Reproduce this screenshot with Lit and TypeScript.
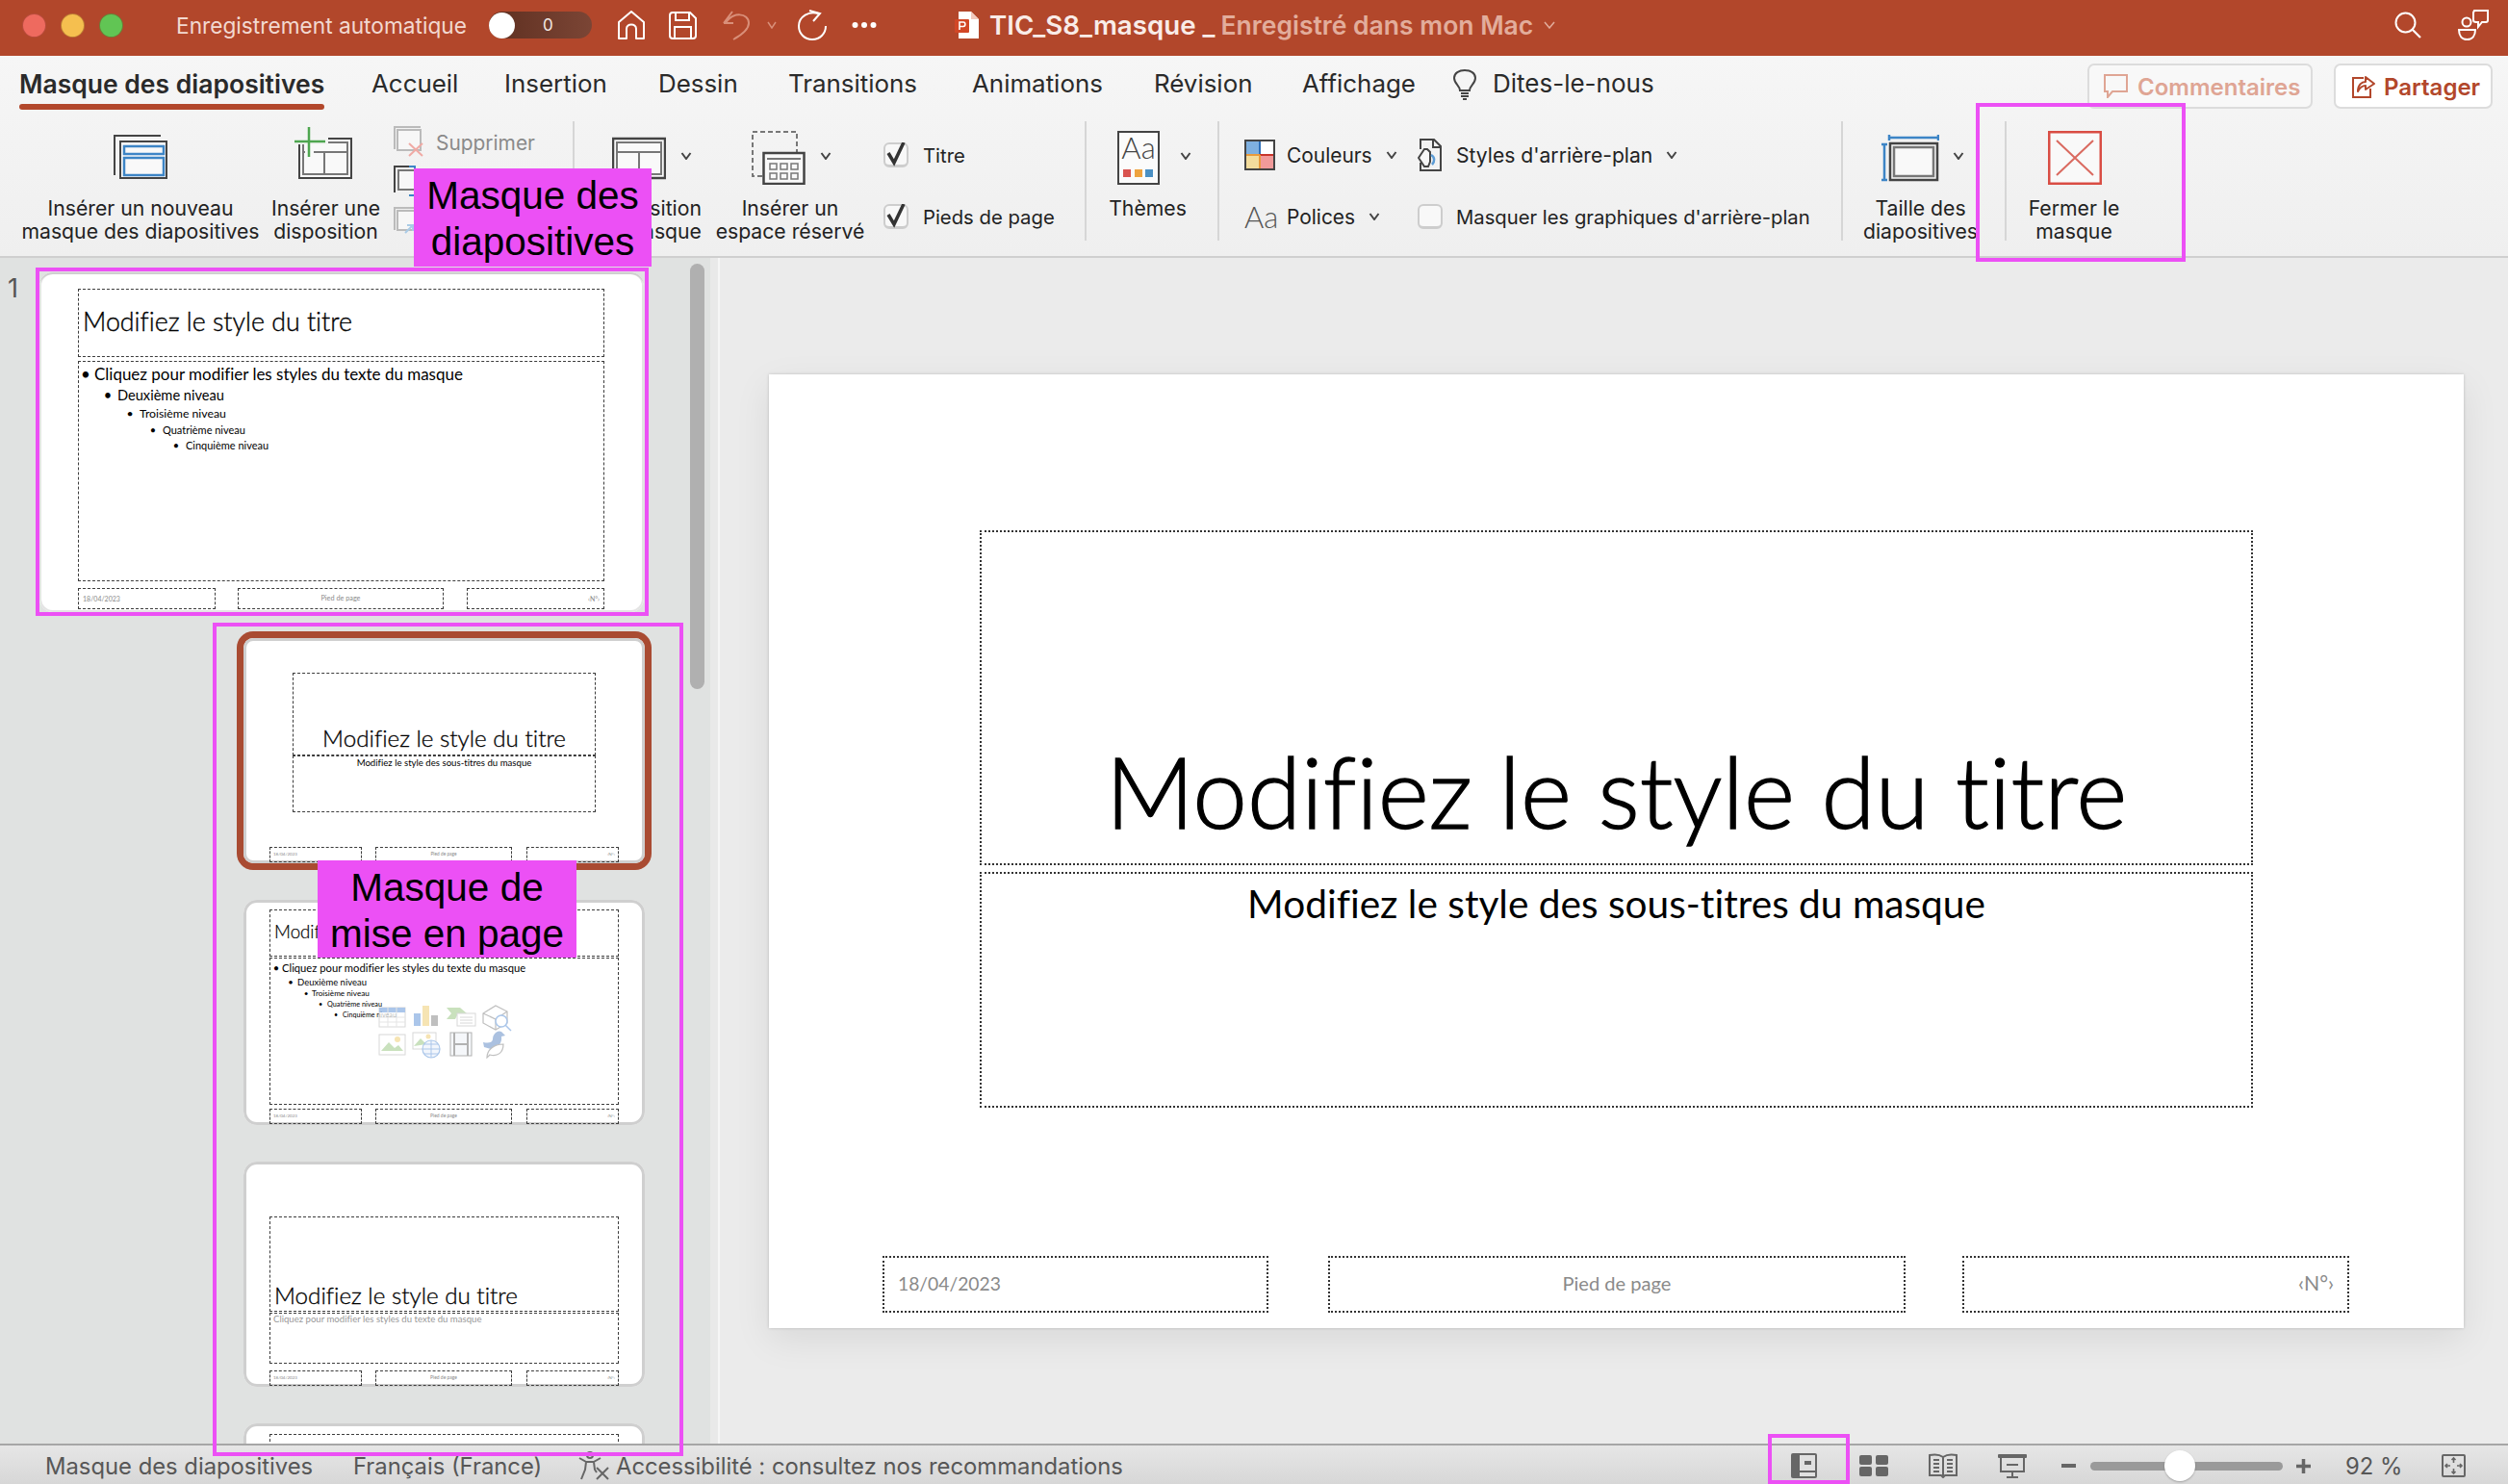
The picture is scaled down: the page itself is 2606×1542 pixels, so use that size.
import { LitElement, html, css, svg } from "lit";
import { customElement } from "lit/decorators.js";

const ctx = document.createElement("canvas").getContext("2d")! as CanvasRenderingContext2D & { letterSpacing: string };
function fit(text: string, target: number, weight = 400): number {
  ctx.font = `${weight} 100px Lato, sans-serif`;
  ctx.letterSpacing = "0.01px";
  return +((target / ctx.measureText(text).width) * 100).toFixed(2);
}

type Line = { bx: number; tx: number; y: number; t: string; w: number };
type Ph = {
  x: number; y: number; w: number; h: number;
  t?: string; tw?: number; c?: string; light?: boolean;
  a?: "l" | "c" | "r"; pt?: number; pl?: number; pr?: number; mid?: boolean;
  lines?: Line[];
};
type Thumb = { w: number; h: number; kind: string; phs: Ph[]; tools?: boolean };

const TITLE = "Modifiez le style du titre";
const SUB = "Modifiez le style des sous-titres du masque";
const L1 = "Cliquez pour modifier les styles du texte du masque";
const L2 = "Deuxième niveau", L3 = "Troisième niveau", L4 = "Quatrième niveau", L5 = "Cinquième niveau";

function foot(y: number, h: number, b: number[][], tw: number[], pad: number): Ph[] {
  return [
    { x: b[0][0], y, w: b[0][1], h, t: "18/04/2023", tw: tw[0], c: "#8a8a8a", a: "l", pl: pad, mid: true },
    { x: b[1][0], y, w: b[1][1], h, t: "Pied de page", tw: tw[1], c: "#8a8a8a", a: "c", mid: true },
    { x: b[2][0], y, w: b[2][1], h, t: "‹N°›", tw: tw[2], c: "#8a8a8a", a: "r", pr: pad, mid: true },
  ];
}
const layFoot = [[27, 96], [137, 142], [294, 96]];

const thumbs: Thumb[] = [
  {
    w: 628, h: 353, kind: "master", phs: [
      { x: 40, y: 17, w: 547, h: 71, t: TITLE, tw: 280, light: true, a: "l", pl: 4, pt: 17 },
      {
        x: 40, y: 92, w: 547, h: 229, lines: [
          { bx: 7, tx: 16, y: 13, t: L1, w: 384 }, { bx: 30, tx: 40, y: 35, t: L2, w: 111 },
          { bx: 53, tx: 63, y: 54, t: L3, w: 90 }, { bx: 77, tx: 87, y: 71, t: L4, w: 86 },
          { bx: 101, tx: 111, y: 87, t: L5, w: 86 },
        ],
      },
      ...foot(328, 22, [[40, 143], [206, 214], [444, 143]], [39, 41, 12], 4),
    ],
  },
  {
    w: 417, h: 234, kind: "selected", phs: [
      { x: 51, y: 36, w: 315, h: 86, t: TITLE, tw: 253, light: true, a: "c", pt: 52 },
      { x: 51, y: 122, w: 315, h: 59, t: SUB, tw: 182, a: "c", pt: 1 },
      ...foot(217, 16, layFoot, [25, 27, 8], 3),
    ],
  },
  {
    w: 417, h: 234, kind: "layout", tools: true, phs: [
      { x: 27, y: 10, w: 363, h: 49, t: TITLE, tw: 195, light: true, a: "l", pl: 4, pt: 10.5 },
      {
        x: 27, y: 60, w: 363, h: 153, lines: [
          { bx: 6, tx: 12, y: 10, t: L1, w: 254 }, { bx: 21, tx: 28, y: 25, t: L2, w: 72 },
          { bx: 37, tx: 43, y: 37, t: L3, w: 60 }, { bx: 52, tx: 59, y: 47.5, t: L4, w: 57 },
          { bx: 68, tx: 75, y: 58.5, t: L5, w: 56 },
        ],
      },
      ...foot(217, 16, layFoot, [25, 28, 8], 3),
    ],
  },
  {
    w: 417, h: 234, kind: "layout", phs: [
      { x: 27, y: 57, w: 363, h: 99, t: TITLE, tw: 253, light: true, a: "l", pl: 4, pt: 66 },
      { x: 27, y: 157, w: 363, h: 53, t: L1, tw: 217, c: "#999", a: "l", pl: 3, pt: 0 },
      ...foot(217, 16, layFoot, [25, 28, 8], 3),
    ],
  },
  { w: 417, h: 234, kind: "layout", phs: [{ x: 27, y: 11, w: 363, h: 100 }] },
];

const mainPhs: Ph[] = [
  { x: 219, y: 162, w: 1323, h: 348, t: TITLE, tw: 1062, light: true, a: "c", pt: 209 },
  { x: 219, y: 517, w: 1323, h: 245, t: SUB, tw: 767, a: "c", pt: 6.5 },
  ...foot(916, 59, [[118, 401], [581, 600], [1240, 402]], [107, 113, 37], 14),
];

const callouts = [
  { x: 430, y: 175, w: 247, h: 102, t: ["Masque des", "diapositives"] },
  { x: 330, y: 894, w: 269, h: 101, t: ["Masque de", "mise en page"] },
];
const frames = [
  { x: 37, y: 278, w: 637, h: 362 },
  { x: 221, y: 647, w: 489, h: 866 },
  { x: 2053, y: 107, w: 218, h: 165 },
  { x: 1837, y: 1490, w: 85, h: 52 },
];

const tabs = [
  { t: "Masque des diapositives", w: 366, on: true },
  { t: "Accueil", w: 138 }, { t: "Insertion", w: 160 }, { t: "Dessin", w: 135 },
  { t: "Transitions", w: 191 }, { t: "Animations", w: 189 }, { t: "Révision", w: 154 }, { t: "Affichage", w: 157 },
];

const chev = (c = "#444") => html`<svg class="chev" viewBox="0 0 12 8"><path d="M1.5 1 L6 7 L10.5 1" fill="none" stroke=${c} stroke-width="2"/></svg>`;
const tick = html`<svg class="tick" width="26" height="26" viewBox="0 0 26 26"><path d="M5 11L11 21L21 0" fill="none" stroke="#333" stroke-width="3.5"/></svg>`;

const ic = {
  insertMaster: html`<svg width="56" height="60" viewBox="0 0 56 60"><path d="M1 50V9H49" fill="none" stroke="#444" stroke-width="2"/><rect x="7" y="15" width="48" height="38" fill="#f9f9f9" stroke="#444" stroke-width="2"/><rect x="11" y="20" width="41" height="8" fill="none" stroke="#3d85c6" stroke-width="2.5"/><rect x="11" y="32" width="41" height="18" fill="none" stroke="#3d85c6" stroke-width="2.5"/></svg>`,
  insertLayout: html`<svg width="60" height="60" viewBox="0 0 60 60"><rect x="5" y="12" width="54" height="41" fill="#f9f9f9" stroke="#444" stroke-width="2"/><rect x="9" y="16" width="46" height="33" fill="none" stroke="#777" stroke-width="2"/><path d="M9 26H55M31 26V49" fill="none" stroke="#777" stroke-width="2"/><rect x="0" y="8" width="35" height="10" fill="#f4f4f4"/><rect x="11" y="18" width="9" height="14" fill="#f9f9f9"/><path d="M0 15H32M15 0V31" fill="none" stroke="#4ea64f" stroke-width="2.5"/></svg>`,
  del: html`<svg width="32" height="32" viewBox="0 0 32 32"><path d="M1 24V1H28" fill="none" stroke="#bbb" stroke-width="2"/><rect x="4" y="4" width="24" height="21" fill="#f7f7f7" stroke="#bbb" stroke-width="2"/><path d="M16 18L30 31M30 18L16 31" stroke="#f0aaa5" stroke-width="2"/></svg>`,
  rename: html`<svg width="32" height="32" viewBox="0 0 32 32"><path d="M1 28V1H20" fill="none" stroke="#444" stroke-width="2"/><rect x="5" y="5" width="22" height="20" fill="#f7f7f7" stroke="#777" stroke-width="2"/><path d="M16 1H22V31H16" fill="none" stroke="#3d85c6" stroke-width="2"/></svg>`,
  keep: html`<svg width="32" height="28" viewBox="0 0 32 28"><path d="M1 24V1H28" fill="none" stroke="#bbb" stroke-width="2"/><rect x="4" y="4" width="24" height="20" fill="#f7f7f7" stroke="#bbb" stroke-width="2"/><path d="M12 27L20 19M14 19H20V25" fill="none" stroke="#a9cbe6" stroke-width="2"/></svg>`,
  layout: html`<svg width="56" height="60" viewBox="0 0 56 60"><rect x="1" y="12" width="54" height="41" fill="#f9f9f9" stroke="#444" stroke-width="2.5"/><rect x="5" y="16" width="46" height="33" fill="none" stroke="#777" stroke-width="2"/><path d="M5 26H51M28 26V49" fill="none" stroke="#777" stroke-width="2"/></svg>`,
  placeholder: html`<svg width="56" height="60" viewBox="0 0 56 60"><rect x="1" y="5" width="46" height="46" fill="none" stroke="#777" stroke-width="2" stroke-dasharray="5 3"/><rect x="12.5" y="27" width="42" height="32" fill="#f9f9f9" stroke="#444" stroke-width="2.5"/><path d="M16 33H51" stroke="#777" stroke-width="2"/>${[0, 1, 2].map((i) => svg`<rect x=${19 + i * 11} y="38" width="7" height="6" fill="none" stroke="#777" stroke-width="1.5"/><rect x=${19 + i * 11} y="48" width="7" height="6" fill="none" stroke="#777" stroke-width="1.5"/>`)}</svg>`,
  themes: html`<svg width="44" height="60" viewBox="0 0 44 60"><rect x="1" y="5" width="42" height="54" fill="#fbfbfb" stroke="#444" stroke-width="2"/><text x="22" y="33" text-anchor="middle" font-family="Lato" font-weight="300" font-size="31" fill="#444">Aa</text><rect x="6" y="44" width="8" height="8" fill="#d9534f"/><rect x="18" y="44" width="8" height="8" fill="#eea33f"/><rect x="29" y="44" width="8" height="8" fill="#4a90c4"/></svg>`,
  colors: html`<svg width="32" height="32" viewBox="0 0 32 32"><rect x="1" y="1" width="30" height="30" fill="#fff" stroke="#444" stroke-width="2"/><rect x="2" y="2" width="14" height="14" fill="#7fb0e0"/><rect x="2" y="16" width="14" height="14" fill="#f3dc9c"/><rect x="16" y="16" width="14" height="14" fill="#f19a9a"/><path d="M16 2V16" stroke="#2e6fb8" stroke-width="2"/><path d="M2 16H16" stroke="#e89a3c" stroke-width="2"/><path d="M16 16H30" stroke="#c8352b" stroke-width="2"/><path d="M16 16V30" stroke="#e89a3c" stroke-width="2"/></svg>`,
  style: html`<svg width="26" height="34" viewBox="0 0 26 34"><path d="M3 11V1H17L24 8V33H3V25" fill="none" stroke="#444" stroke-width="2"/><path d="M16 1V9H24" fill="none" stroke="#444" stroke-width="2"/><path d="M7 11L1 20L7 29H11L13 24V14L10 11Z" fill="#f7f7f7" stroke="#444" stroke-width="2"/><path d="M14 17C18 19 18 24 15 27" fill="none" stroke="#5b9bd5" stroke-width="2.5"/></svg>`,
  size: html`<svg width="60" height="60" viewBox="0 0 60 60"><path d="M8 11H59M8 8V14M59 8V14" fill="none" stroke="#3d85c6" stroke-width="2.5"/><path d="M3 18V55M0 18H6M0 55H6" fill="none" stroke="#3d85c6" stroke-width="2.5"/><rect x="9" y="17" width="49" height="38" fill="#f9f9f9" stroke="#444" stroke-width="2.5"/><rect x="13" y="21" width="41" height="30" fill="none" stroke="#777" stroke-width="2.5"/></svg>`,
  close: html`<svg width="56" height="60" viewBox="0 0 56 60"><rect x="1.25" y="5.25" width="53.5" height="53.5" fill="#f9f9f9" stroke="#d94d44" stroke-width="2.5"/><path d="M9 14L47 50M47 14L9 50" stroke="#da6a60" stroke-width="2"/></svg>`,
};

@customElement("app-root")
export class AppRoot extends LitElement {
  static styles = css`
    :host { display: block; width: 2606px; height: 1542px; position: relative; overflow: hidden; font-family: Inter, "Liberation Sans", sans-serif; color: #2a2a2a; }
    .app { display: flex; flex-direction: column; width: 100%; height: 100%; }
    svg { display: block; flex: none; }

    .title { height: 58px; flex: none; background: #b2472b; display: flex; align-items: center; padding: 0 20px 6px 23px; color: #fff; box-sizing: border-box; }
    .lights { display: flex; gap: 15px; }
    .light { width: 25px; height: 25px; border-radius: 50%; box-sizing: border-box; border: 1px solid rgba(120, 40, 20, .45); }
    .red { background: #ee6a5f; } .yellow { background: #f5bf4f; } .green { background: #61c554; }
    .auto { margin-left: 55px; width: 303px; font-size: 22.7px; white-space: nowrap; color: #f2d9d1; }
    .toggle { margin-left: 22px; width: 107px; height: 28px; border-radius: 14px; background: linear-gradient(90deg, #5e2f20, #7b4535); display: flex; align-items: center; box-sizing: border-box; }
    .knob { width: 27px; height: 27px; border-radius: 50%; background: #fff; flex: none; }
    .zero { margin-left: 29px; font-size: 17px; color: #f3e7e3; }
    .home { margin-left: 26px; } .save { margin-left: 24px; } .undo { margin-left: 27px; } .uchev { margin-left: 18px; }
    .redo { margin-left: 21px; } .dots { margin-left: 25px; } .file { margin-left: 81px; }
    .doc { margin-left: 11px; font-size: 27.7px; font-weight: 600; white-space: nowrap; color: #f9ece8; }
    .saved { margin-left: 6px; font-size: 26.5px; font-weight: 600; white-space: nowrap; color: #e2ad9c; }
    .schev { margin-left: 11px; }
    .search { margin-left: auto; } .collab { margin-left: 38px; }
    .chev { width: 12px; height: 8px; flex: none; }

    .ribbon { flex: none; height: 210px; box-sizing: border-box; border-bottom: 2px solid #cfcfcf; background: linear-gradient(#f6f6f6, #efefef); }
    .tabs { display: flex; height: 68px; padding-left: 20px; padding-right: 16px; box-sizing: border-box; }
    .tab { flex: none; font-size: 25.9px; padding-top: 12px; line-height: 34px; white-space: nowrap; box-sizing: border-box; }
    .tab-label { display: inline-block; }
    .tab.on { font-weight: 600; font-size: 26.5px; }
    .tab.on .tab-label::after { content: ""; display: block; height: 6px; margin-top: 4px; border-radius: 3px; background: #b2472b; }
    .ask { display: flex; align-items: flex-start; padding-top: 12px; font-size: 26px; line-height: 34px; }
    .bulb { margin: 2px 17px 0 0; }
    .actions { margin-left: auto; display: flex; gap: 22px; padding-top: 8px; }
    .btn { height: 47px; box-sizing: border-box; border: 2px solid #dcdcdc; border-radius: 7px; display: flex; align-items: center; font-size: 24px; font-weight: 600; white-space: nowrap; background: #fff; color: #b2472b; padding-top: 2px; }
    .btn svg { margin-top: -2px; }
    .btn.comments { width: 234px; padding-left: 15px; gap: 10px; color: #dfa594; background: #f8f8f8; }
    .btn.share { width: 165px; padding-left: 16px; gap: 9px; }

    .cmds { display: flex; padding-left: 22px; height: 124px; }
    .cmd { flex: none; display: flex; flex-direction: column; }
    .cmd-icon { display: flex; align-items: center; height: 60px; margin-top: 6px; box-sizing: border-box; }
    .cmd-label { margin-top: 12px; font-size: 21.2px; line-height: 24px; text-align: center; white-space: nowrap; color: #222; display: flex; flex-direction: column; align-items: center; }
    .sep { flex: none; width: 2px; height: 124px; background: #d6d6d6; }
    .stack { flex: none; width: 185px; margin-left: 15px; display: flex; flex-direction: column; }
    .stack-row { height: 44px; display: flex; align-items: center; gap: 12px; font-size: 20.9px; color: #8a8a8a; white-space: nowrap; }
    .stack-text { padding-top: 3px; }
    .checks { flex: none; width: 188px; margin-left: 21px; padding-top: 13px; display: flex; flex-direction: column; gap: 20px; box-sizing: border-box; }
    .check-row { height: 44px; display: flex; align-items: center; gap: 15px; font-size: 20.3px; white-space: nowrap; color: #222; }
    .box { flex: none; width: 26px; height: 26px; box-sizing: border-box; border: 2px solid #cdcdcd; border-bottom-width: 3px; border-radius: 6px; background: #f8f8f8; position: relative; }
    .tick { position: absolute; left: -2px; top: -2px; }
    .opts { flex: none; width: 587px; margin-left: 26px; padding-top: 13px; display: grid; grid-template-columns: 180px auto; grid-auto-rows: 44px; row-gap: 20px; box-sizing: border-box; font-size: 20.9px; color: #222; }
    .opt { display: flex; align-items: center; white-space: nowrap; }
    .opt .chev { margin-left: 14px; }
    .opt-ic { flex: none; width: 32px; margin-right: 12px; display: flex; }
    .opt-ic.alt { width: 26px; margin-right: 14px; }
    .opt.wide { font-size: 21.1px; }
    .opt.small { font-size: 20.25px; }
    .aa { font-family: Lato, sans-serif; font-weight: 300; font-size: 31px; color: #555; line-height: 32px; }

    .body { flex: 1; min-height: 0; display: flex; }
    .pane { flex: none; width: 738px; background: #e0e2e1; padding-top: 15px; box-sizing: border-box; overflow: hidden; display: flex; flex-direction: column; gap: 38px; position: relative; }
    .row-master { display: flex; margin-bottom: -11px; }
    .num { width: 41px; flex: none; box-sizing: border-box; padding-left: 8px; font-size: 27px; line-height: 34px; color: #555; }
    .row-layout { padding-left: 253px; }
    .scroll { position: absolute; left: 717px; top: 6px; width: 15px; height: 442px; border-radius: 8px; background: #b0b0b0; }
    .split { flex: none; width: 10px; background: #e9e9e9; border-right: 2px solid #f6f6f6; box-sizing: border-box; }
    .main { flex: 1; background: #ebebeb; padding: 121px 0 0 51px; box-sizing: border-box; }

    .slide { position: relative; background: #fff; color: #000; font-family: Lato, sans-serif; font-variant-ligatures: none; flex: none; }
    .slide.big { width: 1761px; height: 991px; box-shadow: 0 0 3px rgba(0, 0, 0, .18), 0 12px 36px rgba(0, 0, 0, .08); }
    .slide.thumb { border-radius: 14px; }
    .slide.master { box-shadow: inset 0 3px 0 -1px #cfcfcf, inset 0 0 0 2px #e4e4e4; }
    .slide.layout { box-shadow: inset 0 0 0 3px #cfcfcf; }
    .slide.selected { box-shadow: 0 0 0 7px #a94b32, inset 0 0 0 3px #cfcfcf; border-radius: 10px; }
    .ph { position: absolute; box-sizing: border-box; border: 1px dashed #3c3c3c; display: flex; line-height: 1.2; white-space: nowrap; }
    .big .ph { border: 2px dotted #333; }
    .big .ph.mid { padding-bottom: 2px; }
    .a-l { justify-content: flex-start; } .a-c { justify-content: center; } .a-r { justify-content: flex-end; }
    .mid { align-items: center; }
    .light-t { font-weight: 300; -webkit-text-stroke: .013em #000; }
    .li { position: absolute; transform: translateY(-50%); white-space: nowrap; line-height: 1.2; }
    .bul { position: absolute; top: 0; transform: translateX(-50%); }
    .tools { position: absolute; left: 140px; top: 109px; opacity: .75; }

    .status { flex: none; height: 42px; box-sizing: border-box; border-top: 2px solid #a6a6a6; background: linear-gradient(#e6e6e6, #d7d7d7); display: flex; align-items: center; padding: 2px 0 0 47px; font-size: 23.8px; color: #575757; white-space: nowrap; }
    .s1 { width: 278px; } .s2 { margin-left: 42px; width: 195px; } .s3 { margin-left: 39px; } .s4 { margin-left: 6px; width: 526px; }
    .v1 { margin-left: 695px; } .v2 { margin-left: 44px; } .v3, .v4 { margin-left: 42px; }
    .minus { margin-left: 36px; width: 15px; height: 4px; background: #666; }
    .track { margin-left: 15px; width: 200px; height: 9px; border-radius: 5px; background: #9a9a9a; position: relative; }
    .thumb-knob { position: absolute; left: 77px; top: -12px; width: 32px; height: 32px; border-radius: 50%; background: #fff; box-shadow: 0 1px 2px rgba(0, 0, 0, .25); }
    .plus { margin-left: 14px; }
    .pct { margin-left: 36px; width: 57px; }
    .fitv { margin-left: 43px; }

    .frame { position: absolute; box-sizing: border-box; border: 4px solid #ec50f5; }
    .callout { position: absolute; box-sizing: border-box; background: #ec50f5; color: #000; font: 40.5px/48px "Liberation Sans", Arial, sans-serif; text-align: center; padding-top: 4px; white-space: nowrap; }
  `;

  cmd(lines: string[], ml: number, w: number, pad: number, icon: unknown, chevMl = 0) {
    return html`<div class="cmd" style="margin-left:${ml}px;width:${w}px">
      <div class="cmd-icon" style="padding-left:${pad}px">${icon}${chevMl ? html`<span style="margin-left:${chevMl}px">${chev()}</span>` : ""}</div>
      <div class="cmd-label">${lines.map((l) => html`<span>${l}</span>`)}</div>
    </div>`;
  }
  sep(ml: number) { return html`<div class="sep" style="margin-left:${ml}px"></div>`; }

  ph(p: Ph) {
    const fs = p.t && p.tw ? fit(p.t, p.tw, p.light ? 300 : 400) : 0;
    return html`<div class="ph a-${p.a ?? "l"} ${p.mid ? "mid" : ""}"
      style="left:${p.x}px;top:${p.y}px;width:${p.w}px;height:${p.h}px;padding-top:${p.pt ?? 0}px;padding-right:${p.pr ?? 0}px;padding-left:${p.pl ?? 0}px">
      ${p.t ? html`<span class=${p.light ? "light-t" : ""} style="font-size:${fs}px;color:${p.c ?? "#000"}">${p.t}</span>` : ""}
      ${(p.lines ?? []).map((l) => html`<div class="li" style="left:${l.tx}px;top:${l.y}px;font-size:${fit(l.t, l.w)}px"><span class="bul" style="left:${l.bx - l.tx}px">•</span>${l.t}</div>`)}
    </div>`;
  }

  thumb(t: Thumb) {
    return html`<div class="slide thumb ${t.kind}" style="width:${t.w}px;height:${t.h}px">
      ${t.phs.map((p) => this.ph(p))}
      ${t.tools ? this.tools() : ""}
    </div>`;
  }

  tools() {
    return html`<svg class="tools" width="140" height="56" viewBox="0 0 140 56">
      <rect x="1" y="3" width="27" height="20" fill="#fff" stroke="#ccc"/><rect x="1" y="3" width="27" height="5" fill="#8fb4e3"/><path d="M1 13H28M1 18H28M10 3V23M19 3V23" stroke="#ddd" fill="none"/>
      <rect x="37" y="9" width="7" height="13" fill="#8fb4e3"/><rect x="46" y="1" width="7" height="21" fill="#f4dc9a"/><rect x="55" y="11" width="7" height="11" fill="#aaa"/>
      <path d="M71 3H85L92 9H83L80 15H71L76 9Z" fill="#b7d7a8"/><rect x="82" y="9" width="19" height="13" fill="#fff" stroke="#ccc"/><path d="M85 13H98M85 16H98M85 19H98" stroke="#ccc"/>
      <path d="M109 9L122 1L134 7V19L122 26L109 19ZM109 9L122 15L134 7M122 15V26" fill="none" stroke="#aaa" stroke-width="1.2"/><circle cx="128" cy="17" r="6" fill="#fff" stroke="#8fb4e3" stroke-width="1.5"/><path d="M132 21L138 27" stroke="#8fb4e3" stroke-width="1.5"/>
      <rect x="1" y="31" width="27" height="21" fill="#fff" stroke="#ccc"/><path d="M3 48L11 39L17 45L21 42L26 48Z" fill="#b7d7a8"/><circle cx="20" cy="36" r="3" fill="#f4dc9a"/>
      <rect x="36" y="29" width="24" height="17" fill="#fff" stroke="#ccc"/><path d="M37 43L44 35L50 41Z" fill="#b7d7a8"/><circle cx="52" cy="33" r="2.5" fill="#f4dc9a"/><circle cx="55" cy="46" r="9" fill="#eef4fb" stroke="#8fb4e3" stroke-width="1.2"/><path d="M46 46H64M55 37V55M48 41H62M48 51H62" stroke="#8fb4e3" fill="none"/>
      <rect x="75" y="29" width="22" height="24" fill="#f2f5f9" stroke="#999"/><path d="M79 29V53M93 29V53M79 41H93" stroke="#999" stroke-width="2" fill="none"/>
      <path d="M109 39C114 40 118 40 119 36C119 30 124 26 128 28L132 32L128 33C129 40 124 46 117 46L110 44Z" fill="#8fadd6"/><path d="M113 55C113 47 120 41 130 41C130 50 124 54 116 52Z" fill="#fff" stroke="#aaa" stroke-width="1.2"/>
    </svg>`;
  }

  render() {
    return html`<div class="app">
      <div class="title">
        <div class="lights"><span class="light red"></span><span class="light yellow"></span><span class="light green"></span></div>
        <div class="auto">Enregistrement automatique</div>
        <div class="toggle"><span class="knob"></span><span class="zero">0</span></div>
        <svg class="home" width="30" height="30" viewBox="0 0 30 30"><path d="M2 29V12L15 1L28 12V29H20V19C20 13 10 13 10 19V29Z" fill="none" stroke="#fff" stroke-width="2" stroke-linejoin="round"/></svg>
        <svg class="save" width="29" height="29" viewBox="0 0 29 29"><path d="M4 1H22L28 7V25C28 27 27 28 25 28H4C2 28 1 27 1 25V4C1 2 2 1 4 1Z" fill="none" stroke="#fff" stroke-width="2"/><path d="M7 1V9H21V1M6 28V16H23V28" fill="none" stroke="#fff" stroke-width="2"/></svg>
        <svg class="undo" width="28" height="32" viewBox="0 0 28 32"><path d="M1 14L10 2M1 14L11 14M3 14C10 2 27 3 27 14C27 20 20 26 11 31" fill="none" stroke="#d98f79" stroke-width="2"/></svg>
        <svg class="uchev" width="10" height="8" viewBox="0 0 10 8"><path d="M1 1L5 7L9 1" fill="none" stroke="#d98f79" stroke-width="1.5"/></svg>
        <svg class="redo" width="32" height="32" viewBox="0 0 32 32"><path d="M22 4C13 1 2 7 2 17C2 25 8 31 16 31C24 31 30 25 30 17" fill="none" stroke="#fff" stroke-width="2"/><path d="M13 1L24 4L17 12" fill="none" stroke="#fff" stroke-width="2"/></svg>
        <svg class="dots" width="26" height="8" viewBox="0 0 26 8"><circle cx="3.5" cy="4" r="3" fill="#fff"/><circle cx="13" cy="4" r="3" fill="#fff"/><circle cx="22.5" cy="4" r="3" fill="#fff"/></svg>
        <svg class="file" width="25" height="28" viewBox="0 0 25 28"><path d="M4 0H17L25 8V28H4Z" fill="#fff"/><path d="M17 0V8H25" fill="#f1c9bd"/><rect x="0" y="8" width="15" height="14" rx="1" fill="#d24726"/><path d="M5 19V11H9C11.5 11 11.5 15.5 9 15.5H5" fill="none" stroke="#fff" stroke-width="1.6"/></svg>
        <span class="doc">TIC_S8_masque _</span>
        <span class="saved">Enregistré dans mon Mac</span>
        <svg class="schev" width="12" height="8" viewBox="0 0 12 8"><path d="M1 1L6 7L11 1" fill="none" stroke="#e2ad9c" stroke-width="1.5"/></svg>
        <svg class="search" width="28" height="28" viewBox="0 0 28 28"><circle cx="11.5" cy="11.5" r="10" fill="none" stroke="#fff" stroke-width="2"/><path d="M18.5 18.5L27 27" stroke="#fff" stroke-width="2.2"/></svg>
        <svg class="collab" width="32" height="32" viewBox="0 0 32 32"><circle cx="9" cy="13" r="4.5" fill="none" stroke="#fff" stroke-width="2"/><path d="M1 21H18C18 27 15 31 9.5 31C4 31 1 27 1 21Z" fill="none" stroke="#fff" stroke-width="2"/><path d="M17 1H31V11C31 13 30 13 29 13H25L21 18V13H19C17 13 16 12 16 11V3Z" fill="#b2472b" stroke="#fff" stroke-width="2"/></svg>
      </div>

      <div class="ribbon">
        <div class="tabs">
          ${tabs.map((t) => html`<div class="tab ${t.on ? "on" : ""}" style="width:${t.w}px"><span class="tab-label">${t.t}</span></div>`)}
          <div class="ask">
            <svg class="bulb" width="24" height="32" viewBox="0 0 24 32"><path d="M7 22C7 17 1 15 1 9C1 4 6 1 12 1C18 1 23 4 23 9C23 15 17 17 17 22Z" fill="none" stroke="#444" stroke-width="2"/><path d="M8 25H16M8 28H16M10 31H14" stroke="#444" stroke-width="2"/></svg>
            <span>Dites-le-nous</span>
          </div>
          <div class="actions">
            <div class="btn comments"><svg width="25" height="25" viewBox="0 0 25 25"><path d="M1 1H24V18H9L4 24V18H1Z" fill="none" stroke="#dfa594" stroke-width="2"/></svg>Commentaires</div>
            <div class="btn share"><svg width="25" height="25" viewBox="0 0 25 25"><path d="M13 4H2V24H20V15" fill="none" stroke="#b2472b" stroke-width="2"/><path d="M7 18C7 11 11 8 15 8V3L24 10L15 16V12C11 12 9 14 7 18Z" fill="none" stroke="#b2472b" stroke-width="2" stroke-linejoin="round"/></svg>Partager</div>
          </div>
        </div>
        <div class="cmds">
          ${this.cmd(["Insérer un nouveau", "masque des diapositives"], 0, 248, 96, ic.insertMaster)}
          ${this.cmd(["Insérer une", "disposition"], 13, 111, 23, ic.insertLayout)}
          <div class="stack">
            <div class="stack-row">${ic.del}<span class="stack-text">Supprimer</span></div>
            <div class="stack-row">${ic.rename}</div>
            <div class="stack-row">${ic.keep}</div>
          </div>
          ${this.sep(1)}
          ${this.cmd(["Disposition", "du masque"], 19, 115, 20, ic.layout, 15)}
          ${this.cmd(["Insérer un", "espace réservé"], 14, 152, 36, ic.placeholder, 15)}
          <div class="checks">
            <div class="check-row"><span class="box">${tick}</span>Titre</div>
            <div class="check-row"><span class="box">${tick}</span>Pieds de page</div>
          </div>
          ${this.sep(21)}
          ${this.cmd(["Thèmes"], 24, 79, 8, ic.themes, 21)}
          ${this.sep(33)}
          <div class="opts">
            <div class="opt"><span class="opt-ic">${ic.colors}</span>Couleurs${chev()}</div>
            <div class="opt wide"><span class="opt-ic alt">${ic.style}</span>Styles d'arrière-plan${chev()}</div>
            <div class="opt"><span class="opt-ic aa">Aa</span>Polices${chev()}</div>
            <div class="opt small"><span class="opt-ic alt"><span class="box"></span></span>Masquer les graphiques d'arrière-plan</div>
          </div>
          ${this.sep(33)}
          ${this.cmd(["Taille des", "diapositives"], 22, 117, 18, ic.size, 14)}
          ${this.sep(29)}
          ${this.cmd(["Fermer le", "masque"], 15, 110, 28, ic.close)}
        </div>
      </div>

      <div class="body">
        <div class="pane">
          <div class="row-master"><div class="num">1</div>${this.thumb(thumbs[0])}</div>
          ${thumbs.slice(1).map((t) => html`<div class="row-layout">${this.thumb(t)}</div>`)}
          <div class="scroll"></div>
        </div>
        <div class="split"></div>
        <div class="main">
          <div class="slide big">${mainPhs.map((p) => this.ph(p))}</div>
        </div>
      </div>

      <div class="status">
        <span class="s1">Masque des diapositives</span>
        <span class="s2">Français (France)</span>
        <svg class="s3" width="33" height="30" viewBox="0 0 33 30"><circle cx="12" cy="4" r="3" fill="none" stroke="#666" stroke-width="2"/><path d="M1 7L8 11L7 19L3 29M23 7L16 11L17 19L19 22M8 11H16" fill="none" stroke="#666" stroke-width="2"/><path d="M19 17L31 29M31 17L19 29" stroke="#666" stroke-width="2"/></svg>
        <span class="s4">Accessibilité : consultez nos recommandations</span>
        <svg class="v1" width="27" height="26" viewBox="0 0 27 26"><rect width="27" height="26" rx="2" fill="#666"/><rect x="9" y="2" width="16" height="16" fill="#e0e0e0"/><rect x="14" y="8" width="7" height="4" fill="#666"/><rect x="9" y="20" width="16" height="4" fill="#e0e0e0"/></svg>
        <svg class="v2" width="30" height="22" viewBox="0 0 30 22"><rect width="13" height="10" rx="2" fill="#666"/><rect x="17" width="13" height="10" rx="2" fill="#666"/><rect y="12" width="13" height="10" rx="2" fill="#666"/><rect x="17" y="12" width="13" height="10" rx="2" fill="#666"/></svg>
        <svg class="v3" width="30" height="26" viewBox="0 0 30 26"><path d="M15 4C11 1 6 1 1 2V23H13L15 25L17 23H29V2C24 1 19 1 15 4ZM15 4V24M5 7H11M5 11H11M5 15H11M5 19H11M19 7H25M19 11H25M19 15H25M19 19H25" fill="none" stroke="#666" stroke-width="2"/></svg>
        <svg class="v4" width="30" height="25" viewBox="0 0 30 25"><rect width="30" height="4" rx="1" fill="#666"/><path d="M3 4V18H27V4M15 18V23M9 24H21M9 11H21" fill="none" stroke="#666" stroke-width="2"/></svg>
        <span class="minus"></span>
        <span class="track"><span class="thumb-knob"></span></span>
        <svg class="plus" width="15" height="15" viewBox="0 0 15 15"><path d="M0 7.5H15M7.5 0V15" stroke="#666" stroke-width="3.5"/></svg>
        <span class="pct">92 %</span>
        <svg class="fitv" width="25" height="24" viewBox="0 0 25 24"><rect x="1" y="1" width="23" height="22" rx="1" fill="none" stroke="#666" stroke-width="2"/><path d="M12.5 4V9M10.5 6L12.5 4L14.5 6M12.5 15V20M10.5 18L12.5 20L14.5 18M4 12H9M6 10L4 12L6 14M16 12H21M19 10L21 12L19 14" fill="none" stroke="#666" stroke-width="1.6"/></svg>
      </div>
    </div>
    ${frames.map((f) => html`<div class="frame" style="left:${f.x}px;top:${f.y}px;width:${f.w}px;height:${f.h}px"></div>`)}
    ${callouts.map((c) => html`<div class="callout" style="left:${c.x}px;top:${c.y}px;width:${c.w}px;height:${c.h}px">${c.t[0]}<br />${c.t[1]}</div>`)}`;
  }
}
